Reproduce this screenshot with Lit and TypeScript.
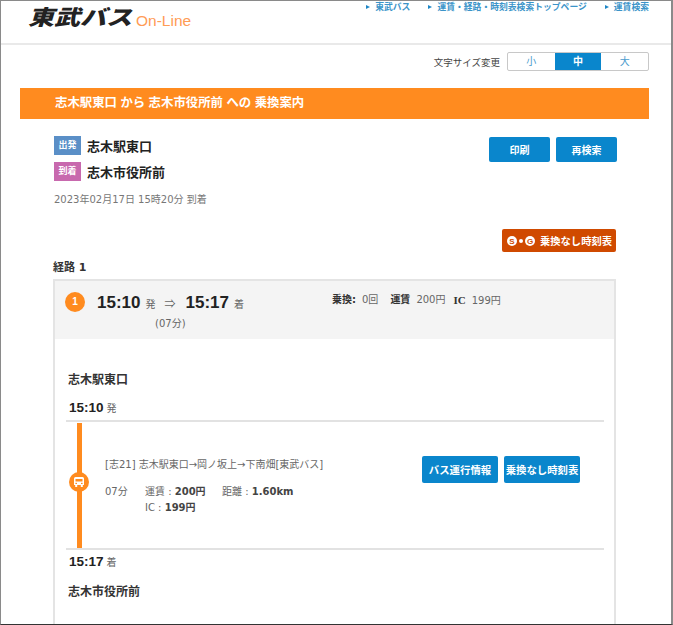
import { LitElement, html, css } from "lit";
import { customElement } from "lit/decorators.js";

@customElement("app-root")
export class AppRoot extends LitElement {
  static styles = css`
    :host { display: block; font-family: "Liberation Sans", "Noto Sans CJK JP", sans-serif; color: #333; }
    * { box-sizing: border-box; }
    .frame { width: 673px; height: 625px; overflow: hidden; background: #fff; border: 1px solid #8a8a8a; border-right: 2px solid #8a8a8a; border-bottom: 1px solid #333; }
    .head { height: 44px; border-bottom: 2px solid #e9e9e9; display: flex; justify-content: space-between; padding-left: 27px; padding-right: 22px; }
    .logo { display: flex; align-items: flex-start; height: 30px; }
    .logo b { display: block; font: italic 900 21px/30px "Noto Sans CJK JP", sans-serif; color: #222; width: 108px; white-space: nowrap; transform: scaleX(1.24); transform-origin: left center; }
    .logo span { font: 15.5px/20px "Liberation Sans", sans-serif; color: #ff9c55; padding-top: 10px; }
    .nav { display: flex; gap: 18px; font-size: 8.8px; line-height: 11px; font-weight: 700; color: #3b94c9; padding-top: 1px; }
    .nav span::before { content: ""; display: inline-block; border-left: 4px solid #1e86c6; border-top: 2px solid transparent; border-bottom: 2px solid transparent; margin-right: 5px; vertical-align: 1px; }
    .size { display: flex; justify-content: flex-end; align-items: center; gap: 7px; padding: 6px 22px 0 0; height: 27px; font-size: 9.5px; color: #444; }
    .seg { display: flex; width: 142px; height: 19px; border: 1px solid #c8c8c8; border-radius: 2px; font-size: 10px; line-height: 17px; text-align: center; color: #4a9bcd; }
    .seg span { flex: 1; }
    .seg .on { background: #0a86cc; color: #fff; font-weight: 700; }
    .bar { margin: 16px 22px 0 19px; height: 31px; background: #ff8b1f; color: #fff; font-size: 12.4px; font-weight: 700; line-height: 30px; padding-left: 35px; }
    .trip { display: flex; justify-content: space-between; padding: 17px 54px 0 53px; }
    .place { display: flex; align-items: center; gap: 6px; height: 19px; margin-bottom: 7px; font-size: 13px; font-weight: 700; color: #222; }
    .tag { width: 27px; height: 19px; color: #fff; font-size: 9px; font-weight: 700; text-align: center; line-height: 19px; }
    .dep { background: #5a8fc7; }
    .arr { background: #c869ae; }
    .date { font: 10px/14px "DejaVu Sans", "Noto Sans CJK JP", sans-serif; color: #777; margin-top: 12px; }
    .btns { display: flex; gap: 6px; padding-top: 1px; height: 26px; }
    .btn { background: #0a86cc; color: #fff; font-weight: 700; font-size: 10px; border-radius: 2px; display: flex; align-items: center; justify-content: center; white-space: nowrap; }
    .btn.top { width: 61px; height: 25px; }
    .btn.route-btn { width: 76px; height: 27px; font-size: 10.4px; }
    .redrow { display: flex; justify-content: flex-end; padding: 22px 55px 0 0; }
    .red { width: 114px; height: 23px; background: #d04a00; border-radius: 2px; color: #fff; font-size: 10.3px; font-weight: 700; display: flex; align-items: center; justify-content: center; gap: 4px; }
    .red svg { display: block; }
    .sect { font: 700 11px/14px "DejaVu Sans", "Noto Sans CJK JP", sans-serif; margin: 9px 0 0 52px; color: #333; }
    .card { width: 563px; margin: 4px 0 0 52px; border: 2px solid #e4e4e4; border-bottom: none; height: 400px; }
    .sum { height: 58px; background: #f4f4f4; display: flex; padding: 11px 0 0 10px; position: relative; }
    .num { width: 20px; height: 20px; border-radius: 50%; background: #ff8b1f; color: #fff; font-size: 10px; font-weight: 700; text-align: center; line-height: 20px; }
    .times { margin-left: 12px; width: 235px; }
    .t { display: flex; align-items: baseline; font-size: 17px; line-height: 22px; font-weight: 700; color: #222; }
    .t small { font-size: 10px; font-weight: 400; color: #666; margin-left: 5px; }
    .t i { font-style: normal; font-weight: 400; font-size: 11px; color: #666; margin: 0 10px 0 9px; }
    .dur { font: 10px/14px "DejaVu Sans", "Noto Sans CJK JP", sans-serif; color: #666; margin: 1px 0 0 58px; }
    .info { font: 10px/14px "DejaVu Sans", "Noto Sans CJK JP", sans-serif; color: #666; padding-top: 1px; display: flex; gap: 12px; }
    .info b { color: #333; margin-right: 6px; }
    .info b.ic { font: 700 11px/14px "Liberation Serif", serif; margin-left: -4px; }
    .body { padding: 32px 10px 0 11px; }
    .stn { font-size: 12px; font-weight: 700; line-height: 18px; color: #333; padding-left: 2px; }
    .tm { font-size: 13.5px; font-weight: 700; line-height: 16px; color: #222; margin-top: 11px; padding: 0 0 3px 3px; }
    .tm small { font-size: 10px; font-weight: 400; color: #666; margin-left: 3px; }
    .route { border-top: 2px solid #e2e2e2; border-bottom: 2px solid #e2e2e2; height: 130px; display: flex; padding-top: 1px; }
    .rail { width: 26px; margin-left: 2px; display: flex; justify-content: center; position: relative; }
    .rail .ln { width: 5px; background: #ff8b1f; height: 125px; margin-left: -3px; }
    .stop { position: absolute; left: 1px; top: 49px; width: 20px; height: 20px; border-radius: 50%; background: #ff8b1f; display: flex; align-items: center; justify-content: center; }
    .detail { width: 317px; margin-left: 11px; padding-top: 35px; font: 10px "DejaVu Sans", "Noto Sans CJK JP", sans-serif; color: #666; }
    .detail .r { line-height: 14px; margin-bottom: 12px; white-space: nowrap; }
    .fare { display: grid; grid-template-columns: 40px 77px auto; line-height: 16px; }
    .fare b { color: #444; }
    .fare .ic { grid-column: 2 / 4; }
    .lb { display: flex; gap: 6px; padding-top: 33px; }
    .after { padding-top: 4px; }
    .after .tm { margin-top: 0; padding-bottom: 12px; }
  `;

  render() {
    return html`
      <div class="frame">
        <div class="head">
          <div class="logo"><b>東武バス</b><span>On-Line</span></div>
          <div class="nav"><span>東武バス</span><span>運賃・経路・時刻表検索トップページ</span><span>運賃検索</span></div>
        </div>
        <div class="size">文字サイズ変更
          <div class="seg"><span>小</span><span class="on">中</span><span>大</span></div>
        </div>
        <div class="bar">志木駅東口 から 志木市役所前 への 乗換案内</div>
        <div class="trip">
          <div>
            <div class="place"><span class="tag dep">出発</span>志木駅東口</div>
            <div class="place"><span class="tag arr">到着</span>志木市役所前</div>
            <div class="date">2023年02月17日 15時20分 到着</div>
          </div>
          <div class="btns"><div class="btn top">印刷</div><div class="btn top">再検索</div></div>
        </div>
        <div class="redrow">
          <div class="red">
            <svg width="30" height="12" viewBox="0 0 30 12">
              <circle cx="6" cy="6" r="5" fill="#fff"/><circle cx="24" cy="6" r="5" fill="#fff"/><circle cx="15" cy="6" r="2" fill="#fff"/>
              <text x="6" y="9" font-size="8" font-weight="700" text-anchor="middle" fill="#d04a00" font-family="Liberation Sans">S</text>
              <text x="24" y="9" font-size="8" font-weight="700" text-anchor="middle" fill="#d04a00" font-family="Liberation Sans">G</text>
            </svg>
            <span>乗換なし時刻表</span>
          </div>
        </div>
        <div class="sect">経路 1</div>
        <div class="card">
          <div class="sum">
            <div class="num">1</div>
            <div class="times">
              <div class="t">15:10<small>発</small><i>⇒</i>15:17<small>着</small></div>
              <div class="dur">(07分)</div>
            </div>
            <div class="info"><span><b>乗換:</b>0回</span><span><b>運賃</b>200円</span><span><b class="ic">IC</b>199円</span></div>
          </div>
          <div class="body">
            <div class="stn">志木駅東口</div>
            <div class="tm">15:10<small>発</small></div>
            <div class="route">
              <div class="rail">
                <div class="ln"></div>
                <div class="stop">
                  <svg width="12" height="12" viewBox="0 0 12 12" fill="#fff">
                    <path d="M2.5 1h7A1.5 1.5 0 0 1 11 2.5V9H1V2.5A1.5 1.5 0 0 1 2.5 1z"/>
                    <rect x="2.2" y="9" width="2" height="2"/><rect x="7.8" y="9" width="2" height="2"/>
                    <rect x="2.5" y="3" width="7" height="2.5" fill="#ff8b1f"/>
                    <rect x="2.4" y="6.8" width="1.6" height="1.2" fill="#ff8b1f"/><rect x="8" y="6.8" width="1.6" height="1.2" fill="#ff8b1f"/>
                  </svg>
                </div>
              </div>
              <div class="detail">
                <div class="r">[志21] 志木駅東口→岡ノ坂上→下南畑[東武バス]</div>
                <div class="fare">
                  <span>07分</span><span>運賃 : <b>200円</b></span><span>距離 : <b>1.60km</b></span>
                  <span></span><span class="ic">IC : <b>199円</b></span>
                </div>
              </div>
              <div class="lb"><div class="btn route-btn">バス運行情報</div><div class="btn route-btn">乗換なし時刻表</div></div>
            </div>
            <div class="after">
              <div class="tm">15:17<small>着</small></div>
              <div class="stn">志木市役所前</div>
            </div>
          </div>
        </div>
      </div>
    `;
  }
}
